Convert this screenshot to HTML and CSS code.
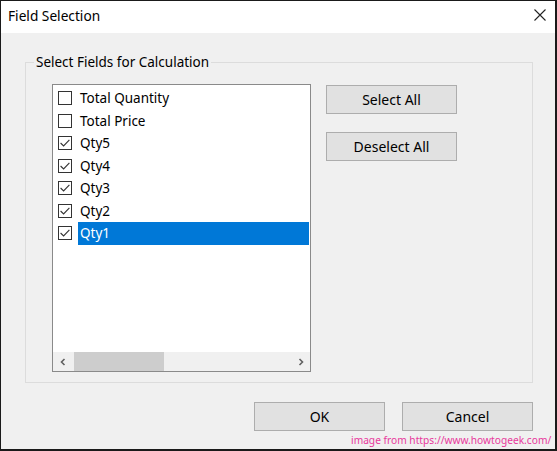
FILE: index.html
```html
<!DOCTYPE html>
<html>
<head>
<meta charset="utf-8">
<link rel="stylesheet" href="styles.css">
</head>
<body>
<div class="window">
  <div class="titlebar">
    <span class="title">Field Selection</span>
    <svg class="close" width="12" height="12" viewBox="0 0 12 12"><path d="M0.5 0.5 L11.5 11.5 M11.5 0.5 L0.5 11.5" stroke="#222" stroke-width="1.1" fill="none"/></svg>
  </div>
  <div class="body">
    <fieldset class="group">
      <legend class="legend">Select Fields for Calculation</legend>
      <div class="group-inner">
        <div class="listbox">
          <div class="rows">
            <div class="row"><svg class="cb" width="14" height="14" viewBox="0 0 14 14"><rect x="0.5" y="0.5" width="13" height="13" fill="#fff" stroke="#333"/></svg><span class="label">Total Quantity</span></div>
            <div class="row"><svg class="cb" width="14" height="14" viewBox="0 0 14 14"><rect x="0.5" y="0.5" width="13" height="13" fill="#fff" stroke="#333"/></svg><span class="label">Total Price</span></div>
            <div class="row"><svg class="cb" width="14" height="14" viewBox="0 0 14 14"><rect x="0.5" y="0.5" width="13" height="13" fill="#fff" stroke="#333"/><path d="M2.6 7 L5.6 10 L11.4 3.8" stroke="#333" stroke-width="1.1" fill="none"/></svg><span class="label">Qty5</span></div>
            <div class="row"><svg class="cb" width="14" height="14" viewBox="0 0 14 14"><rect x="0.5" y="0.5" width="13" height="13" fill="#fff" stroke="#333"/><path d="M2.6 7 L5.6 10 L11.4 3.8" stroke="#333" stroke-width="1.1" fill="none"/></svg><span class="label">Qty4</span></div>
            <div class="row"><svg class="cb" width="14" height="14" viewBox="0 0 14 14"><rect x="0.5" y="0.5" width="13" height="13" fill="#fff" stroke="#333"/><path d="M2.6 7 L5.6 10 L11.4 3.8" stroke="#333" stroke-width="1.1" fill="none"/></svg><span class="label">Qty3</span></div>
            <div class="row"><svg class="cb" width="14" height="14" viewBox="0 0 14 14"><rect x="0.5" y="0.5" width="13" height="13" fill="#fff" stroke="#333"/><path d="M2.6 7 L5.6 10 L11.4 3.8" stroke="#333" stroke-width="1.1" fill="none"/></svg><span class="label">Qty2</span></div>
            <div class="row"><svg class="cb" width="14" height="14" viewBox="0 0 14 14"><rect x="0.5" y="0.5" width="13" height="13" fill="#fff" stroke="#333"/><path d="M2.6 7 L5.6 10 L11.4 3.8" stroke="#333" stroke-width="1.1" fill="none"/></svg><span class="label selected">Qty1</span></div>
          </div>
          <div class="hscroll">
            <div class="arrow"><svg width="8" height="8" viewBox="0 0 8 8"><path d="M5.5 1 L2.5 4 L5.5 7" stroke="#606060" stroke-width="1.6" fill="none"/></svg></div>
            <div class="track"><div class="thumb"></div></div>
            <div class="arrow"><svg width="8" height="8" viewBox="0 0 8 8"><path d="M2.5 1 L5.5 4 L2.5 7" stroke="#606060" stroke-width="1.6" fill="none"/></svg></div>
          </div>
        </div>
        <div class="side-buttons">
          <div class="btn">Select All</div>
          <div class="btn">Deselect All</div>
        </div>
      </div>
    </fieldset>
    <div class="footer">
      <div class="btn wide">OK</div>
      <div class="btn wide">Cancel</div>
    </div>
  </div>
  <div class="watermark">image from https://www.howtogeek.com/</div>
</div>
</body>
</html>
```

FILE: styles.css
```css
html, body {
  margin: 0;
  padding: 0;
  background: #000;
}
body {
  font-family: "Noto Sans", "Open Sans", sans-serif;
  font-size: 13.5px;
  color: #000;
}
.window {
  position: relative;
  width: 557px;
  height: 451px;
  box-sizing: border-box;
  border-top: 1px solid #1a1a1a;
  border-left: 1px solid #1a1a1a;
  border-right: 2px solid #1a1a1a;
  border-bottom: 2px solid #1a1a1a;
  display: flex;
  flex-direction: column;
  overflow: hidden;
}
.titlebar {
  height: 32px;
  flex: none;
  background: #fff;
  display: flex;
  align-items: center;
  justify-content: space-between;
  padding: 0 9px 4px 7px;
  box-sizing: border-box;
}
.title {
  font-size: 13.7px;
}
.close {
  display: block;
}
.body {
  flex: 1;
  background: #f0f0f0;
  padding: 21px 22px 0 24px;
  display: flex;
  flex-direction: column;
}
.group {
  margin: 0;
  padding: 14px 0 10px 0;
  border: 1px solid #dcdcdc;
  min-width: 0;
}
.legend {
  margin-left: 8px;
  padding: 0 2px;
  font-size: 13.5px;
  line-height: 16px;
  color: #000;
}
.group-inner {
  display: flex;
  align-items: flex-start;
  gap: 15px;
  padding-left: 26px;
}
.listbox {
  width: 259px;
  height: 288px;
  box-sizing: border-box;
  border: 1px solid #8a8a8a;
  background: #fff;
  display: flex;
  flex-direction: column;
}
.rows {
  flex: 1;
  padding: 2px 1px 0 5px;
}
.row {
  height: 22.5px;
  display: flex;
  align-items: center;
}
.cb {
  display: block;
  flex: none;
  margin-right: 6px;
}
.label {
  flex: 1;
  height: 22.5px;
  line-height: 22px;
  padding-left: 2px;
}
.label.selected {
  background: #0078d7;
  color: #fff;
}
.hscroll {
  height: 19px;
  flex: none;
  background: #f0f0f0;
  display: flex;
  align-items: stretch;
}
.arrow {
  width: 19px;
  display: flex;
  align-items: center;
  justify-content: center;
  flex: none;
}
.track {
  flex: 1;
  padding: 0 0 0 2px;
  display: flex;
}
.thumb {
  width: 90px;
  background: #cdcdcd;
}
.side-buttons {
  display: flex;
  flex-direction: column;
  gap: 18px;
  margin-top: 1px;
}
.btn {
  width: 131px;
  height: 29px;
  box-sizing: border-box;
  border: 1px solid #adadad;
  background: #e1e1e1;
  display: flex;
  align-items: center;
  justify-content: center;
  font-size: 14px;
}
.footer {
  display: flex;
  justify-content: flex-end;
  gap: 17px;
  margin-top: 19px;
}
.watermark {
  position: absolute;
  left: 350px;
  top: 431px;
  font-size: 10.2px;
  line-height: 16px;
  white-space: nowrap;
  color: #e8389c;
}
```
